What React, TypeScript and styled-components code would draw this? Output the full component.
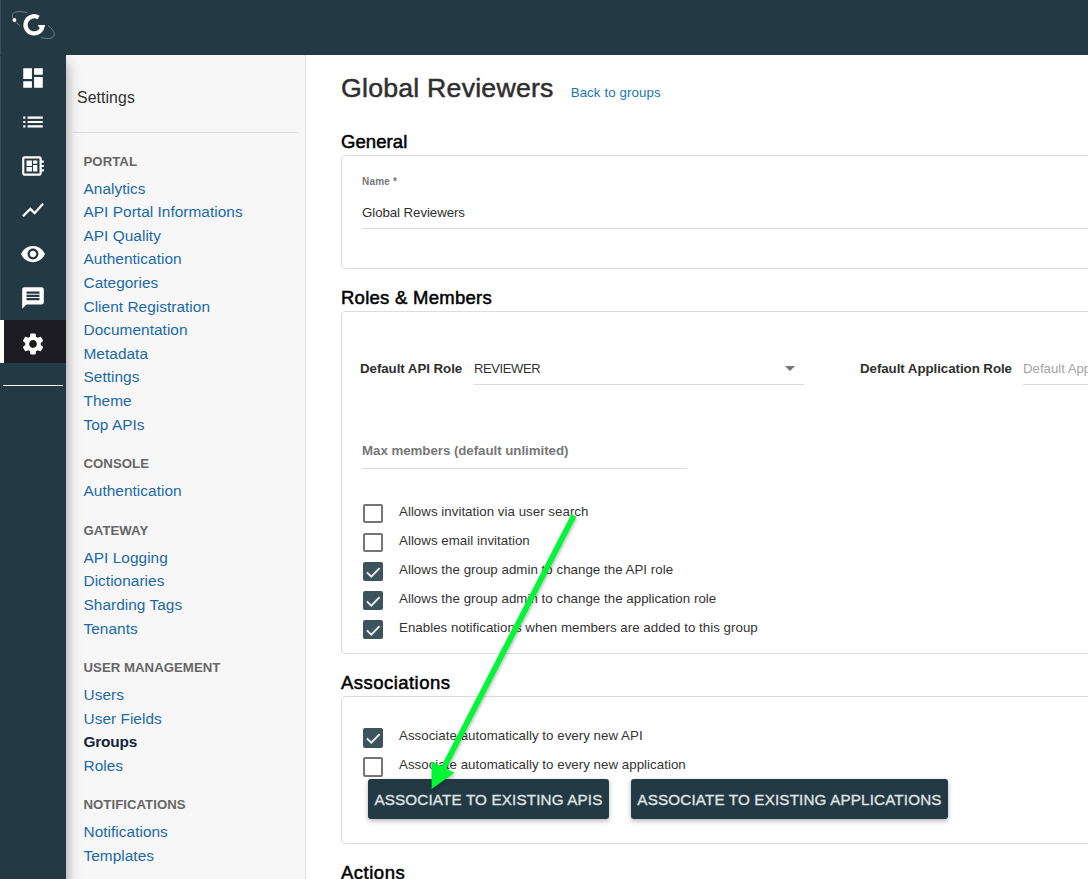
import React from "react";
import styled, { createGlobalStyle, css } from "styled-components";
import {
  MdDashboard,
  MdList,
  MdDeveloperBoard,
  MdShowChart,
  MdRemoveRedEye,
  MdMessage,
  MdSettings,
} from "react-icons/md";

const GlobalStyle = createGlobalStyle`
  *, *::before, *::after { box-sizing: border-box; }
  body {
    margin: 0;
    overflow: hidden;
    background: #fff;
    color: #2f2f2f;
    font-family: "Liberation Sans", Arial, sans-serif;
    font-size: 13.3px;
    letter-spacing: 0.03px;
  }
`;

const Shell = styled.div`
  display: grid;
  grid-template: 55px 1fr / 66px 240px 1fr;
  width: 1088px;
  height: 879px;
  overflow: hidden;
`;

const TopBar = styled.header`
  grid-column: 1 / -1;
  background: #233a44;
  border-left: 1px solid #34505c;
  padding: 8px 0 0 9px;
`;

const Rail = styled.nav`
  position: relative;
  display: flex;
  flex-direction: column;
  padding-top: 1px;
  background: #233a44;
  box-shadow: 1px 8px 12px rgba(0, 0, 0, 0.36);
  clip-path: inset(0 -24px 0 0);
`;

const RailItem = styled.a<{ $active?: boolean }>`
  display: flex;
  align-items: center;
  justify-content: center;
  height: 44px;
  color: #fff;
  border-left: 1px solid #34505c;
  padding-right: 1px;
  ${(p) =>
    p.$active &&
    css`
      height: 43px;
      background: #1c1c22;
      border-left: 4px solid #fff;
      padding: 4px 4px 0 0;
    `}
`;

const RailDivider = styled.div`
  height: 1px;
  margin: 22px 3px 0;
  background: #fff;
`;

const SubMenu = styled.aside`
  background: #f7f7f7;
  border-right: 1px solid #dcdcdc;
`;

const SubMenuTitle = styled.div`
  margin: 0 7px 0.7px;
  padding: 33px 0 0 4px;
  height: 78px;
  border-bottom: 1px solid #dcdfe1;
  font-size: 15.8px;
  line-height: 20px;
  letter-spacing: 0.1px;
`;

const MenuHeading = styled.h5`
  height: 42.9px;
  margin: 0 0 0 17.5px;
  padding-top: 18px;
  font-size: 13.2px;
  line-height: 20px;
  letter-spacing: 0.04px;
  font-weight: 700;
  color: #666;
`;

const MenuLink = styled.a<{ $active?: boolean }>`
  display: block;
  height: 23.61px;
  margin-left: 17.5px;
  font-size: 15.4px;
  line-height: 23.6px;
  letter-spacing: ${(p) => (p.$active ? "-0.18px" : "0.04px")};
  color: ${(p) => (p.$active ? "#14253f" : "#1d69a6")};
  font-weight: ${(p) => (p.$active ? 700 : 400)};
`;

const Main = styled.main`
  width: 1100px;
  padding-left: 35px;
`;

const TitleRow = styled.div`
  display: flex;
  align-items: baseline;
  gap: 17px;
  height: 58px;
  padding-top: 17px;
`;

const Title = styled.h1`
  margin: 0;
  font-size: 26.7px;
  line-height: 32px;
  font-weight: 400;
  letter-spacing: 0.22px;
  -webkit-text-stroke: 0.5px currentColor;
`;

const BackLink = styled.a`
  color: #1b75b5;
  letter-spacing: 0.1px;
`;

const SectionHeading = styled.h2<{ $tracking?: number }>`
  height: 42px;
  margin: 0;
  padding-top: 18px;
  font-size: 18.5px;
  line-height: 22px;
  font-weight: 400;
  letter-spacing: ${(p) => p.$tracking ?? 0.2}px;
  color: #000;
  -webkit-text-stroke: 0.5px currentColor;
`;

const Card = styled.section<{ $height: number }>`
  height: ${(p) => p.$height}px;
  border: 1px solid #dcdcdf;
  border-radius: 4px;
`;

const NameField = styled.label`
  display: flex;
  flex-direction: column;
  margin: 18px 0 0 20px;
  height: 55px;
  border-bottom: 1px solid #dcdcdc;
`;

const SmallLabel = styled.span`
  font-size: 10px;
  line-height: 16px;
  letter-spacing: 0.18px;
  font-weight: 700;
  color: #777;
`;

const FieldValue = styled.span`
  margin-top: 13px;
  line-height: 20px;
  letter-spacing: -0.08px;
`;

const RoleRow = styled.div`
  display: flex;
  padding: 46px 0 0 18px;
`;

const RoleField = styled.div<{ $width: number }>`
  display: flex;
  width: ${(p) => p.$width}px;
`;

const RoleLabel = styled.span<{ $width: number }>`
  width: ${(p) => p.$width}px;
  line-height: 22px;
  font-weight: 700;
  letter-spacing: -0.05px;
  white-space: nowrap;
`;

const Select = styled.div<{ $placeholder?: boolean }>`
  display: flex;
  justify-content: space-between;
  align-items: flex-start;
  width: 330px;
  height: 27px;
  padding-right: 9px;
  border-bottom: 1px solid #dcdcdc;
  line-height: 22px;
  color: ${(p) => (p.$placeholder ? "#a3a3a3" : "#333")};
  font-size: ${(p) => (p.$placeholder ? "13.3px" : "13px")};
  letter-spacing: ${(p) => (p.$placeholder ? "-0.05px" : "-0.4px")};
`;

const Caret = styled.i`
  margin-top: 8px;
  border: 5px solid transparent;
  border-top-color: #757575;
  border-bottom: 0;
`;

const MaxMembers = styled.div`
  width: 325px;
  height: 28px;
  margin: 56px 0 0 20px;
  border-bottom: 1px solid #dcdcdc;
  line-height: 20px;
  font-weight: 700;
  letter-spacing: -0.04px;
  color: #777;
`;

const CheckList = styled.div<{ $top: number; $lineHeight: number; $boxHeight: number }>`
  display: flex;
  flex-direction: column;
  gap: 9px;
  padding: ${(p) => p.$top}px 0 0 21px;
  line-height: ${(p) => p.$lineHeight}px;
  --box-height: ${(p) => p.$boxHeight}px;
`;

const CheckRow = styled.label`
  display: flex;
  gap: 16px;
  height: 20px;
  color: #333;
`;

const Box = styled.span<{ $checked?: boolean }>`
  display: flex;
  align-items: center;
  width: 20px;
  height: var(--box-height);
  border-radius: 2px;
  border: ${(p) => (p.$checked ? "0" : "2px solid #757575")};
  background: ${(p) => (p.$checked ? "#3c545d" : "transparent")};
`;

const ButtonRow = styled.div`
  display: flex;
  gap: 22px;
  padding: 2px 0 0 26px;
`;

const Button = styled.button<{ $width: number }>`
  width: ${(p) => p.$width}px;
  height: 40px;
  padding: 0;
  border: 0;
  border-radius: 3px;
  background: #233a44;
  color: #dfe2e3;
  font-family: inherit;
  font-size: 15.2px;
  letter-spacing: 0.17px;
  white-space: nowrap;
  -webkit-text-stroke: 0.35px currentColor;
  box-shadow: 0 2px 5px rgba(0, 0, 0, 0.3);
`;

const PointerArrow = styled.svg`
  position: absolute;
  left: 420px;
  top: 505px;
  filter: drop-shadow(1px 2px 1.5px rgba(0, 0, 0, 0.25));
`;

const Logo = () => (
  <svg width="48" height="36" viewBox="10 8 48 36" fill="none">
    <path d="M38.6 17.5 A8.6 8.6 0 1 0 42.7 25" stroke="#fff" strokeWidth="4.2" />
    <path d="M37.6 25 H44.7 L43.5 29 L39.6 28 Z" fill="#fff" />
    <path d="M14 20 C10 14 13 9.5 27 12.6 M14.5 21 L20 25.8" stroke="#73868e" strokeWidth="0.9" />
    <path d="M48 25.5 C54 30 56 35 52.5 37.6 C50 39 45 38.6 41 37.6" stroke="#73868e" strokeWidth="0.9" />
    <circle cx="14.4" cy="20" r="1.9" fill="#fff" />
  </svg>
);

const Check = ({ checked, children }: { checked?: boolean; children: React.ReactNode }) => (
  <CheckRow>
    <Box $checked={checked}>
      {checked && (
        <svg width="20" height="20" viewBox="0 0 20 20" fill="none">
          <path d="M3.9 10.4 L8.3 14.7 L16.6 6.1" stroke="#e8ecee" strokeWidth="2" />
        </svg>
      )}
    </Box>
    {children}
  </CheckRow>
);

const railIcons = [MdDashboard, MdList, MdDeveloperBoard, MdShowChart, MdRemoveRedEye, MdMessage, MdSettings];

const menu = [
  {
    heading: "PORTAL",
    links: [
      "Analytics",
      "API Portal Informations",
      "API Quality",
      "Authentication",
      "Categories",
      "Client Registration",
      "Documentation",
      "Metadata",
      "Settings",
      "Theme",
      "Top APIs",
    ],
  },
  { heading: "CONSOLE", links: ["Authentication"] },
  { heading: "GATEWAY", links: ["API Logging", "Dictionaries", "Sharding Tags", "Tenants"] },
  { heading: "USER MANAGEMENT", links: ["Users", "User Fields", "Groups", "Roles"] },
  { heading: "NOTIFICATIONS", links: ["Notifications", "Templates"] },
];

export default function App() {
  return (
    <>
      <GlobalStyle />
      <Shell>
        <TopBar>
          <Logo />
        </TopBar>
        <Rail>
          {railIcons.map((Icon, i) => (
            <RailItem key={i} $active={Icon === MdSettings}>
              <Icon size={26} />
            </RailItem>
          ))}
          <RailDivider />
        </Rail>
        <SubMenu>
          <SubMenuTitle>Settings</SubMenuTitle>
          {menu.map((group) => (
            <div key={group.heading}>
              <MenuHeading>{group.heading}</MenuHeading>
              {group.links.map((link) => (
                <MenuLink key={link} $active={link === "Groups"}>
                  {link}
                </MenuLink>
              ))}
            </div>
          ))}
        </SubMenu>
        <Main>
          <TitleRow>
            <Title>Global Reviewers</Title>
            <BackLink>Back to groups</BackLink>
          </TitleRow>
          <SectionHeading $tracking={0.08}>General</SectionHeading>
          <Card $height={114}>
            <NameField>
              <SmallLabel>Name *</SmallLabel>
              <FieldValue>Global Reviewers</FieldValue>
            </NameField>
          </Card>
          <SectionHeading $tracking={0.26}>Roles &amp; Members</SectionHeading>
          <Card $height={343}>
            <RoleRow>
              <RoleField $width={500}>
                <RoleLabel $width={114}>Default API Role</RoleLabel>
                <Select>
                  REVIEWER
                  <Caret />
                </Select>
              </RoleField>
              <RoleField $width={500}>
                <RoleLabel $width={163}>Default Application Role</RoleLabel>
                <Select $placeholder>Default Application Role</Select>
              </RoleField>
            </RoleRow>
            <MaxMembers>Max members (default unlimited)</MaxMembers>
            <CheckList $top={35} $lineHeight={16} $boxHeight={19}>
              <Check>Allows invitation via user search</Check>
              <Check>Allows email invitation</Check>
              <Check checked>Allows the group admin to change the API role</Check>
              <Check checked>Allows the group admin to change the application role</Check>
              <Check checked>Enables notifications when members are added to this group</Check>
            </CheckList>
          </Card>
          <SectionHeading $tracking={0.46}>Associations</SectionHeading>
          <Card $height={148}>
            <CheckList $top={31} $lineHeight={15} $boxHeight={20}>
              <Check checked>Associate automatically to every new API</Check>
              <Check>Associate automatically to every new application</Check>
            </CheckList>
            <ButtonRow>
              <Button $width={241}>ASSOCIATE TO EXISTING APIS</Button>
              <Button $width={317}>ASSOCIATE TO EXISTING APPLICATIONS</Button>
            </ButtonRow>
          </Card>
          <SectionHeading $tracking={0.5}>Actions</SectionHeading>
        </Main>
      </Shell>
      <PointerArrow width="170" height="300" viewBox="420 505 170 300">
        <path d="M573.8 515.5 L443 769" stroke="#00f734" strokeWidth="5.6" />
        <path d="M431.7 789 L431.5 761.5 L454.5 772.7 Z" fill="#00f734" />
      </PointerArrow>
    </>
  );
}
